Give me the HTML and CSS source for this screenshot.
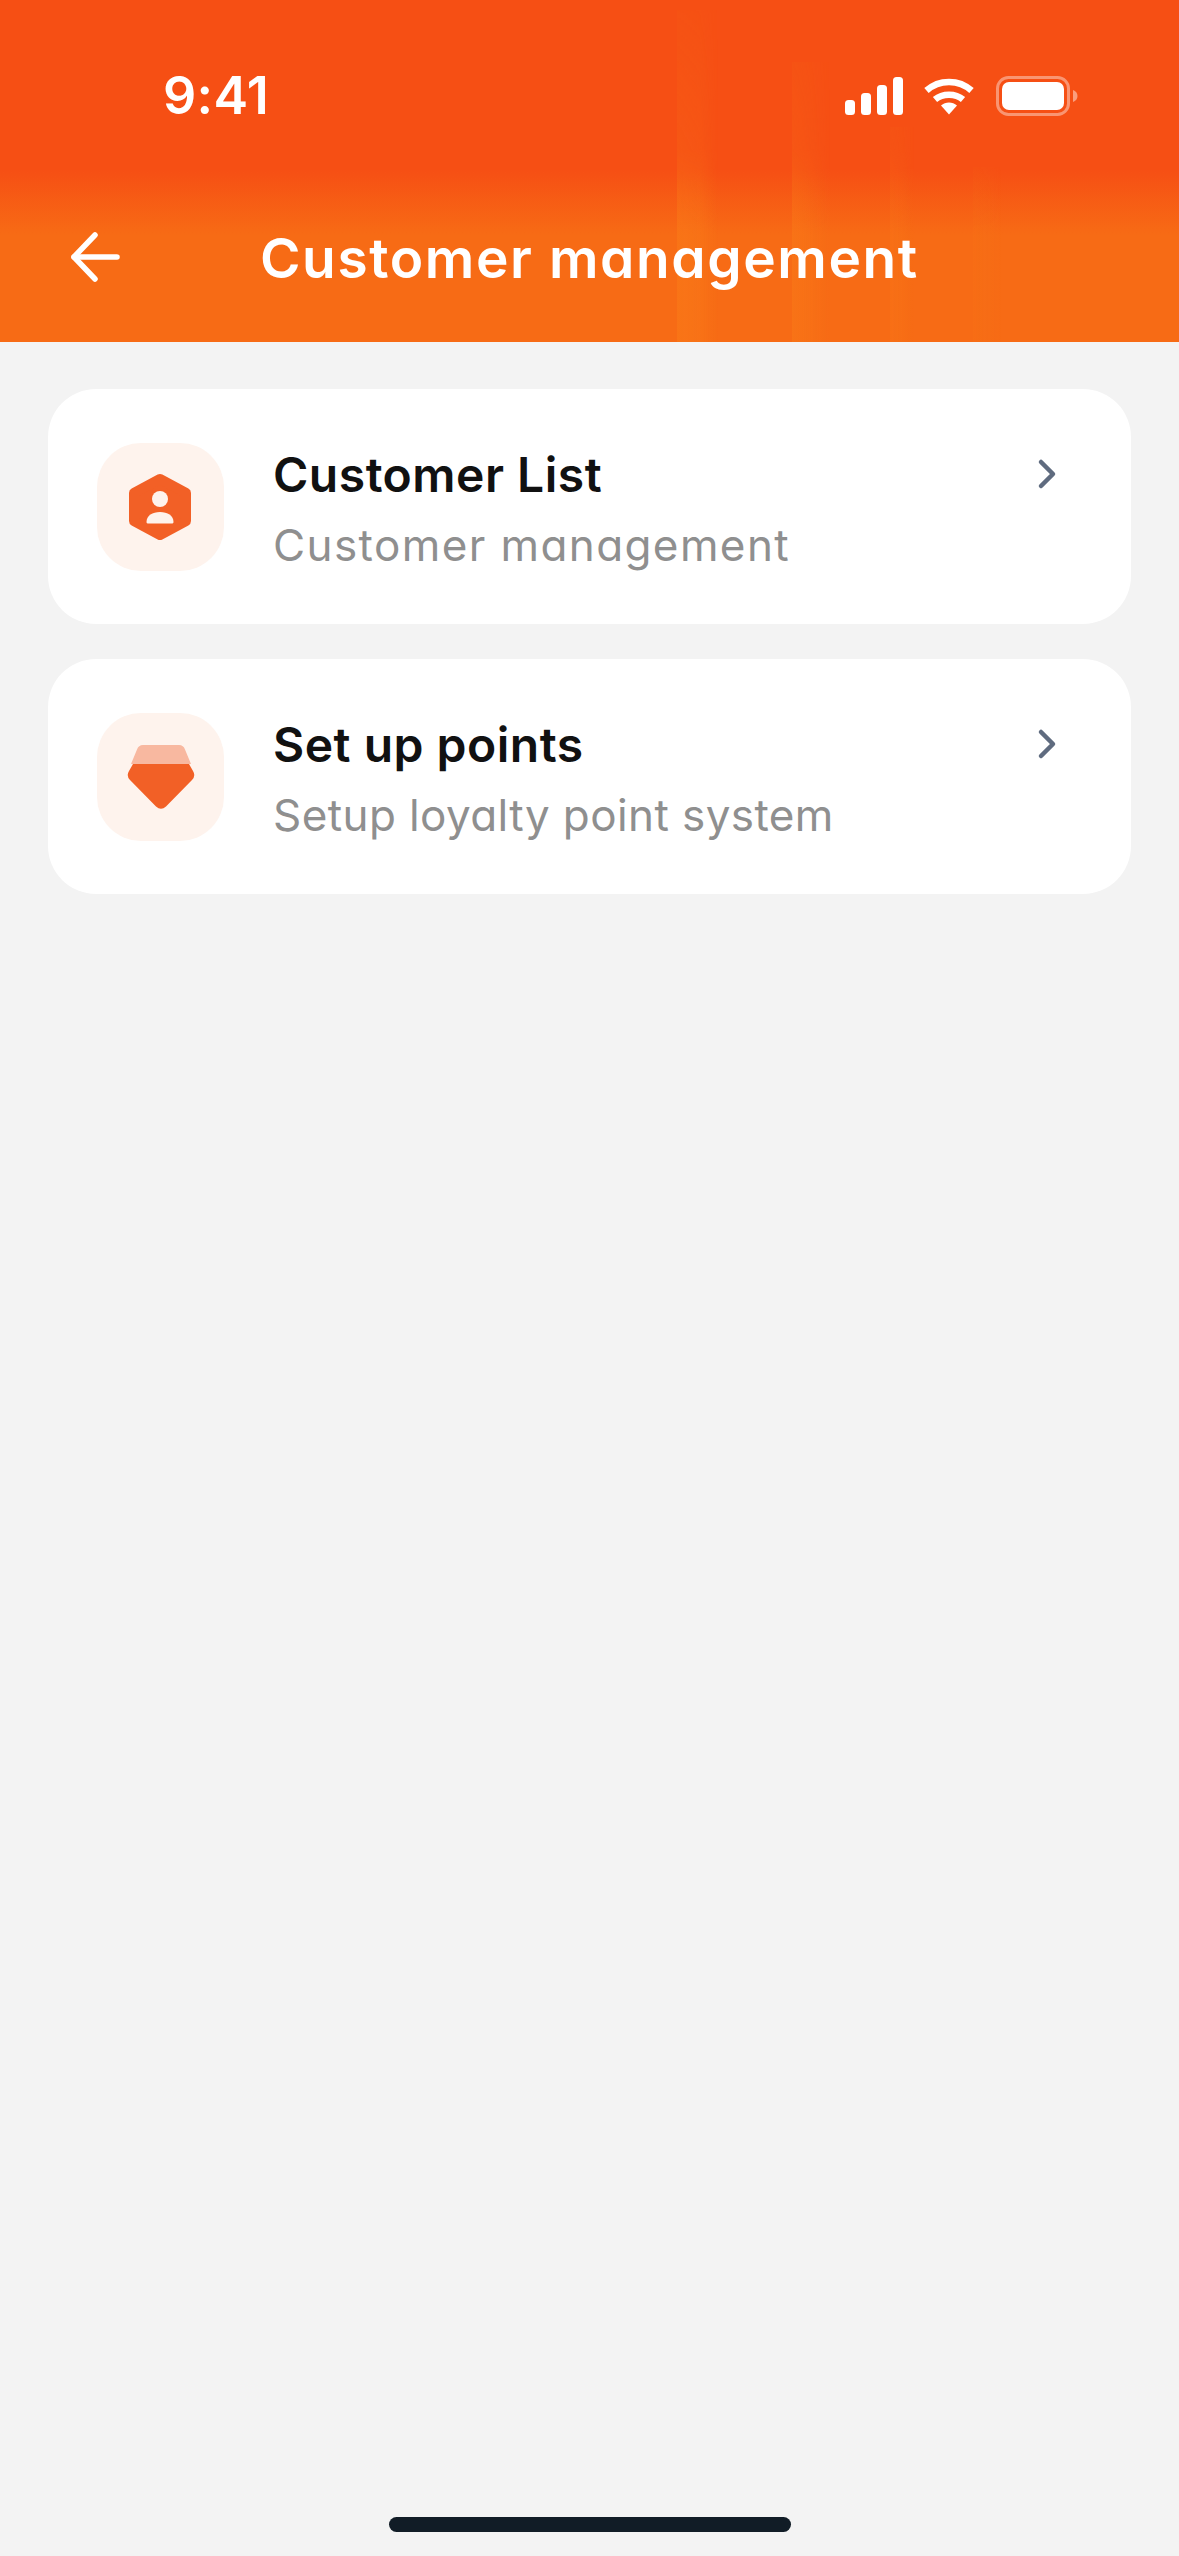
FILE: index.html
```html
<!DOCTYPE html>
<html lang="en">

<head>
  <meta charset="UTF-8">
  <meta name="viewport" content="width=device-width, initial-scale=1.0">
  <title>Customer management</title>

  <link rel="stylesheet" href="styles.css">
</head>

<body>
  <div class="page">
    <header class="top">
      <div class="status-bar">
        <span class="time">9:41</span>
        <div class="status-icons">
          <svg class="signal" width="58" height="38" viewBox="0 0 58 38" fill="#fff">
            <rect x="0" y="23" width="10" height="15" rx="3.5" />
            <rect x="16" y="16" width="10" height="22" rx="3.5" />
            <rect x="32" y="8" width="10" height="30" rx="3.5" />
            <rect x="48" y="0" width="10" height="38" rx="3.5" />
          </svg>
          <svg class="wifi" width="50" height="38" viewBox="0 0 50 38" fill="none" stroke="#fff">
            <path d="M2.5 13.5C15 2 35 2 47.5 13.5" stroke-width="6.5" />
            <path d="M11 22.5C18.5 16 31.5 16 39 22.5" stroke-width="6.5" />
            <path d="M17 28.5C21.5 24.5 28.5 24.5 33 28.5L25 37.5Z" fill="#fff" stroke="none" />
          </svg>
          <svg class="battery" width="82" height="40" viewBox="0 0 82 40" fill="#fff">
            <rect x="1.5" y="1.5" width="71" height="37" rx="11" fill="none" stroke="#fff" stroke-opacity=".4" stroke-width="3" />
            <rect x="6" y="6" width="62" height="28" rx="7" />
            <path d="M77 14c2.800 1 4.500 3.300 4.500 6s-1.700 5-4.500 6z" fill-opacity=".45" />
          </svg>
        </div>
      </div>

      <nav class="nav-row">
        <svg class="back" width="50" height="50" viewBox="0 0 50 50" fill="none" stroke="#fff" stroke-width="5.5" stroke-linecap="round" stroke-linejoin="round">
          <path d="M47 25H4" />
          <path d="M25 3L4 25l21 22" />
        </svg>
        <h1 class="nav-title">Customer management</h1>
      </nav>
    </header>

    <main class="list">
      <a class="card">
        <div class="card-icon">
          <svg width="66" height="68" viewBox="0 0 66 68">
            <path d="M32 6L58 20V48L32 62L6 48V20Z" fill="#f26026" stroke="#f26026" stroke-width="10" stroke-linejoin="round" />
            <circle cx="32" cy="26" r="8" fill="#fef3ed" />
            <path d="M18.500 49c0-6.500 6-10 13.500-10s13.500 3.500 13.500 10c0 1-.8 1.500-2 1.500h-23c-1.200 0-2-.5-2-1.500z" fill="#fef3ed" />
          </svg>
        </div>
        <div class="card-text">
          <div class="card-title">Customer List</div>
          <div class="card-sub card-sub-wide">Customer management</div>
        </div>
        <svg class="chevron" width="20" height="32" viewBox="0 0 20 32" fill="none" stroke="#5f6b7f" stroke-width="4.5" stroke-linecap="round" stroke-linejoin="round">
          <path d="M4 4L16 16L4 28" />
        </svg>
      </a>

      <a class="card">
        <div class="card-icon">
          <svg width="68" height="68" viewBox="0 0 68 68">
            <path d="M4 21L10 6.500C11 3.500 13 2 16 2H52C55 2 57 3.500 58 6.500L64 21Z" fill="#f8b8a0" />
            <path d="M6 21H62L66 28Q69 33 65 37L39 63.500Q34 68 29 63.500L3 37Q-1 33 2 28Z" fill="#f26026" />
          </svg>
        </div>
        <div class="card-text">
          <div class="card-title">Set up points</div>
          <div class="card-sub">Setup loyalty point system</div>
        </div>
        <svg class="chevron" width="20" height="32" viewBox="0 0 20 32" fill="none" stroke="#5f6b7f" stroke-width="4.5" stroke-linecap="round" stroke-linejoin="round">
          <path d="M4 4L16 16L4 28" />
        </svg>
      </a>
    </main>

    <footer class="home-bar">
      <div class="home-indicator"></div>
    </footer>
  </div>
</body>

</html>
```

FILE: styles.css
```css
* {
  box-sizing: border-box;
}

body {
  background: #f3f3f3;
  font-family: "Inter", "Liberation Sans", sans-serif;
  margin: 0;
}

.page {
  display: flex;
  flex-direction: column;
  height: 2556px;
  overflow: hidden;
  width: 1179px;
}

.top {
  background: linear-gradient(180deg, #f64f14 0, #f64f14 170px, #f76b15 235px, #f76b15 100%);
  color: #fff;
  flex: none;
  height: 342px;
  padding-top: 75px;
  position: relative;
}

/* the lighter vertical streaks in the banner */
.top::before {
  background:
    linear-gradient(90deg, rgba(250, 125, 25, .5) 0, rgba(250, 125, 25, .4) 55%, rgba(250, 125, 25, 0) 100%) 677px 100% / 41px 332px no-repeat,
    linear-gradient(90deg, rgba(250, 125, 25, .45) 0, rgba(250, 125, 25, .3) 40%, rgba(250, 125, 25, 0) 100%) 792px 100% / 38px 280px no-repeat,
    linear-gradient(90deg, rgba(250, 125, 25, .25) 0, rgba(250, 125, 25, .15) 60%, rgba(250, 125, 25, 0) 100%) 890px 100% / 24px 215px no-repeat,
    linear-gradient(90deg, rgba(250, 125, 25, .12) 0, rgba(250, 125, 25, .08) 60%, rgba(250, 125, 25, 0) 100%) 973px 100% / 28px 175px no-repeat;
  content: "";
  inset: 0;
  -webkit-mask-image: linear-gradient(180deg, rgba(0, 0, 0, .1) 0, rgba(0, 0, 0, .35) 150px, #000 230px);
  mask-image: linear-gradient(180deg, rgba(0, 0, 0, .1) 0, rgba(0, 0, 0, .35) 150px, #000 230px);
  position: absolute;
}

.status-bar,
.nav-row {
  position: relative;
}

.status-bar {
  align-items: center;
  display: flex;
  height: 41px;
  justify-content: space-between;
  padding: 0 101px 0 163px;
}

.time {
  font-size: 52px;
  font-weight: 600;
  letter-spacing: .3px;
  line-height: 41px;
}

.status-icons {
  align-items: center;
  display: flex;
}

.signal {
  margin-right: 21px;
}

.wifi {
  margin-right: 22px;
}

.nav-row {
  align-items: center;
  display: flex;
  height: 50px;
  margin-top: 116px;
  padding-left: 70px;
}

.nav-title {
  font-feature-settings: "cv11";
  font-size: 55px;
  font-weight: 600;
  letter-spacing: 1.6px;
  line-height: 50px;
  margin: 2px 0 0 140px;
  white-space: nowrap;
}

.list {
  display: flex;
  flex: 1;
  flex-direction: column;
  gap: 35px;
  padding: 47px 48px 0;
}

.card {
  align-items: flex-start;
  background: #fff;
  border-radius: 48px;
  display: flex;
  height: 235px;
  padding: 54px 74px 0 49px;
}

.card-icon {
  align-items: center;
  background: #fef3ed;
  border-radius: 44px;
  display: flex;
  flex: none;
  height: 128px;
  justify-content: center;
  margin-right: 49px;
  width: 127px;
}

.card-text {
  flex: 1;
}

.card-title {
  color: #111;
  font-feature-settings: "cv11";
  font-size: 48px;
  font-weight: 600;
  letter-spacing: .5px;
  line-height: 56px;
  margin-top: 4px;
  white-space: nowrap;
}

.card-sub {
  color: #8f8f8f;
  font-feature-settings: "cv11";
  font-size: 44px;
  font-weight: 400;
  letter-spacing: .4px;
  line-height: 50px;
  margin-top: 17px;
  white-space: nowrap;
}

.card-sub-wide {
  letter-spacing: 1.4px;
}

.chevron {
  flex: none;
  margin-top: 15px;
}

.home-bar {
  display: flex;
  flex: none;
  height: 39px;
  justify-content: center;
}

.home-indicator {
  background: #111c26;
  border-radius: 8px;
  height: 15px;
  width: 402px;
}
```
